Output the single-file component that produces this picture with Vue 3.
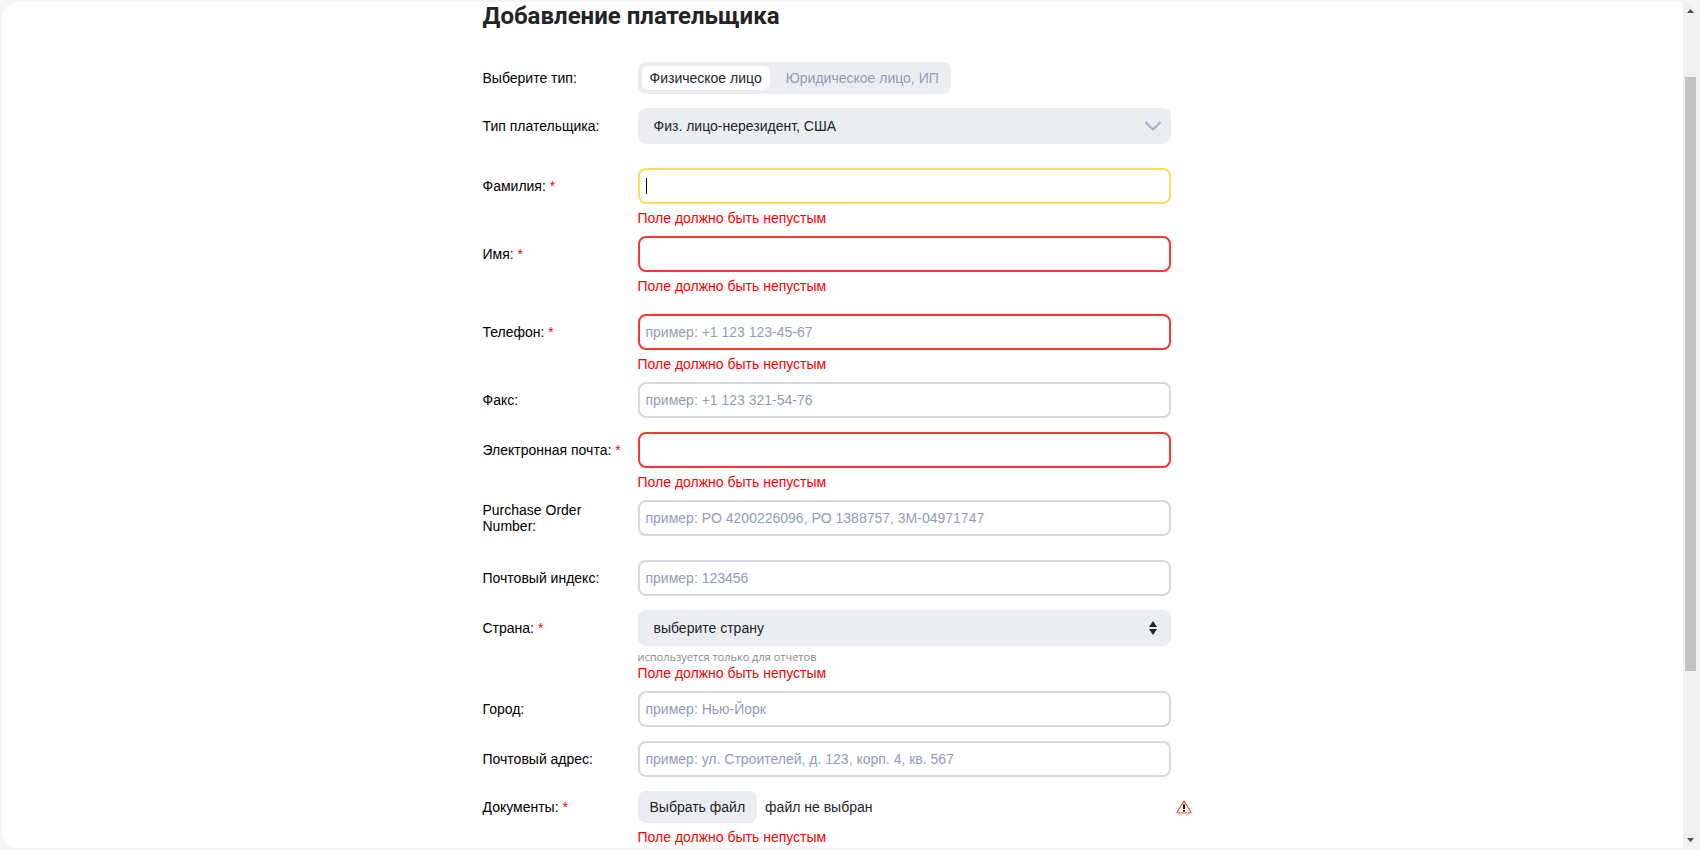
<script setup>
import { reactive, ref } from 'vue'

const payerKinds = [
  { id: 'person', title: 'Физическое лицо' },
  { id: 'company', title: 'Юридическое лицо, ИП' },
]
const kind = ref('person')

const required = 'Поле должно быть непустым'

const groups = [
  [
    { id: 'kind', label: 'Выберите тип:', type: 'segments' },
    { id: 'payer-type', label: 'Тип плательщика:', type: 'select', icon: 'chevron', options: ['Физ. лицо-нерезидент, США'] },
  ],
  [
    { id: 'last-name', label: 'Фамилия:', required: true, state: 'focused', error: required },
    { id: 'first-name', label: 'Имя:', required: true, state: 'invalid', error: required },
  ],
  [
    { id: 'phone', label: 'Телефон:', required: true, state: 'invalid', placeholder: 'пример: +1 123 123-45-67', error: required },
    { id: 'fax', label: 'Факс:', placeholder: 'пример: +1 123 321-54-76' },
    { id: 'email', label: 'Электронная почта:', required: true, state: 'invalid', error: required },
    { id: 'po-number', label: 'Purchase Order Number:', placeholder: 'пример: PO 4200226096, PO 1388757, 3M-04971747' },
  ],
  [
    { id: 'postcode', label: 'Почтовый индекс:', placeholder: 'пример: 123456' },
    { id: 'country', label: 'Страна:', required: true, type: 'select', icon: 'sort', options: ['выберите страну'], hint: 'используется только для отчетов', error: required },
    { id: 'city', label: 'Город:', placeholder: 'пример: Нью-Йорк' },
    { id: 'address', label: 'Почтовый адрес:', placeholder: 'пример: ул. Строителей, д. 123, корп. 4, кв. 567' },
    { id: 'documents', label: 'Документы:', required: true, type: 'file', error: required },
  ],
]

const values = reactive({
  'payer-type': 'Физ. лицо-нерезидент, США',
  country: 'выберите страну',
})
</script>

<template>
  <div class="page">
    <div class="panel">
      <main class="content">
        <form class="form" @submit.prevent>
          <h1 class="title">Добавление плательщика</h1>

          <section v-for="(group, g) in groups" :key="g" class="group">
            <div v-for="field in group" :key="field.id" class="row" :class="{ 'has-error': field.error }">
              <component
                :is="field.type === 'segments' ? 'span' : 'label'"
                :id="field.id + '-label'"
                class="label"
                :for="field.type === 'segments' ? null : field.id"
              >{{ field.label }}<span v-if="field.required" class="star"> *</span></component>

              <div v-if="field.type === 'segments'" class="control">
                <div class="segments" role="radiogroup" :aria-labelledby="field.id + '-label'">
                  <label v-for="k in payerKinds" :key="k.id" class="segment" :class="{ active: kind === k.id }">
                    <input v-model="kind" class="hidden-input" type="radio" name="kind" :value="k.id" />{{ k.title }}
                  </label>
                </div>
              </div>

              <div v-else-if="field.type === 'select'" class="control">
                <select :id="field.id" v-model="values[field.id]" class="select">
                  <option v-for="o in field.options" :key="o">{{ o }}</option>
                </select>
                <svg v-if="field.icon === 'chevron'" class="select-icon" width="18" height="18" viewBox="0 0 18 18" aria-hidden="true">
                  <path d="M1.5 5 L9 12.5 L16.5 5" fill="none" stroke="#a5aec2" stroke-width="2" />
                </svg>
                <svg v-else class="select-icon" width="18" height="18" viewBox="0 0 18 18" aria-hidden="true">
                  <path d="M9 2 L13 8 H5 Z M9 16 L13 10 H5 Z" fill="#21232b" />
                </svg>
              </div>

              <div v-else-if="field.type === 'file'" class="control file">
                <label class="file-button" :for="field.id">Выбрать файл</label>
                <input :id="field.id" class="hidden-input" type="file" />
                <span class="file-name">файл не выбран</span>
              </div>

              <div v-else class="control">
                <input
                  :id="field.id"
                  v-model="values[field.id]"
                  class="input"
                  :class="field.state"
                  type="text"
                  :placeholder="field.placeholder"
                />
                <span v-if="field.state === 'focused'" class="caret"></span>
              </div>

              <svg v-if="field.type === 'file'" class="warning" width="16" height="14" viewBox="0 0 16 14" role="img" aria-label="Ошибка">
                <path d="M8 1 L14.5 11.5 Q15 13 13.5 13 H2.5 Q1 13 1.5 11.5 Z" fill="#fff" stroke="#f5402c" stroke-width="1.2" stroke-linejoin="round" />
                <path d="M7 4.5 H9 V9 H7 Z M7 10 H9 V11.5 H7 Z" fill="#000" />
              </svg>

              <div v-if="field.error" class="messages">
                <div v-if="field.hint" class="hint">{{ field.hint }}</div>
                <div class="error">{{ field.error }}</div>
              </div>
            </div>
          </section>
        </form>
      </main>

      <div class="scrollbar" aria-hidden="true">
        <svg class="arrow" width="7" height="4" viewBox="0 0 7 4"><path d="M0 4 L3.5 0 L7 4 Z" fill="#505050" /></svg>
        <div class="thumb"></div>
        <svg class="arrow arrow-down" width="7" height="4" viewBox="0 0 7 4"><path d="M0 0 L3.5 4 L7 0 Z" fill="#505050" /></svg>
      </div>
    </div>
  </div>
</template>

<style>
body {
  margin: 0;
  background: #f5f5f5;
}
</style>

<style scoped>
.page {
  box-sizing: border-box;
  height: 100vh;
  padding: 2px;
  background: #f5f5f5;
  font-family: 'Liberation Sans', Arial, sans-serif;
  font-size: 14px;
  line-height: 16px;
  color: #000;
}
.panel {
  display: flex;
  height: 100%;
  overflow: hidden;
  background: #fff;
  border-radius: 16px;
}
.content {
  flex: 1;
  min-width: 0;
  overflow: hidden;
}
.form {
  max-width: 720px;
  margin: 0 auto;
}
.title {
  margin: 0 0 32px;
  font-family: Roboto, sans-serif;
  font-size: 24px;
  line-height: 28px;
  font-weight: 700;
  color: #222426;
}
.group {
  margin-bottom: 24px;
}
.row {
  display: grid;
  grid-template-columns: 155px minmax(0, 533px) 1fr;
  align-items: center;
  margin-bottom: 14px;
}
.row.has-error {
  margin-bottom: 9px;
}
.group .row:last-child {
  margin-bottom: 0;
}
.group .row.has-error:last-child {
  margin-bottom: 19px;
}
.group:has(.has-error:last-child) {
  margin-bottom: 0;
}
.label {
  padding-right: 10px;
}
.star {
  color: #f00;
}
.control {
  position: relative;
}
.input,
.select {
  display: block;
  box-sizing: border-box;
  width: 100%;
  height: 36px;
  margin: 0;
  border-radius: 8px;
  outline: none;
  font: inherit;
  color: #222426;
}
.input {
  padding: 0 6px;
  border: 2px solid #d4d8e2;
  background: #fff;
}
.input::placeholder {
  color: #939cb4;
  opacity: 1;
}
.input.invalid {
  border-color: #ff3333;
}
.input.focused {
  border-color: #ffdb62;
}
.caret {
  position: absolute;
  left: 8px;
  top: 10px;
  width: 1px;
  height: 16px;
  background: #000;
}
.select {
  appearance: none;
  padding: 0 40px 0 16px;
  border: 0;
  background: #ecedf1;
}
.select-icon {
  position: absolute;
  right: 9px;
  top: 9px;
  pointer-events: none;
}
.segments {
  display: inline-flex;
  gap: 8px;
  box-sizing: border-box;
  height: 32px;
  padding: 4px;
  border-radius: 8px;
  background: #ecedf1;
  vertical-align: top;
}
.segment {
  padding: 0 8px;
  border-radius: 6px;
  line-height: 24px;
  color: #939cb4;
  white-space: nowrap;
}
.segment.active {
  background: #fff;
  color: #222426;
}
.hidden-input {
  position: absolute;
  width: 1px;
  height: 1px;
  margin: 0;
  opacity: 0;
}
.file {
  display: flex;
  align-items: center;
  gap: 8px;
  line-height: 32px;
  color: #222426;
}
.file-button {
  padding: 0 12px;
  border-radius: 8px;
  background: #ecedf1;
}
.warning {
  margin-left: 5px;
}
.messages {
  grid-column: 2;
  margin-top: 5px;
}
.hint {
  margin-bottom: 2px;
  font: 11px/11px 'Open Sans', 'Noto Sans', sans-serif;
  color: #888;
}
.error {
  line-height: 18px;
  color: #f00;
}
.scrollbar {
  display: grid;
  grid-template-rows: 17px 58fr 594fr 160fr 17px;
  justify-items: center;
  align-items: center;
  width: 15px;
  background: #f0f0f0;
}
.thumb {
  grid-row: 3;
  width: 11px;
  height: 100%;
  background: #c1c1c1;
}
.arrow-down {
  grid-row: 5;
}
</style>
